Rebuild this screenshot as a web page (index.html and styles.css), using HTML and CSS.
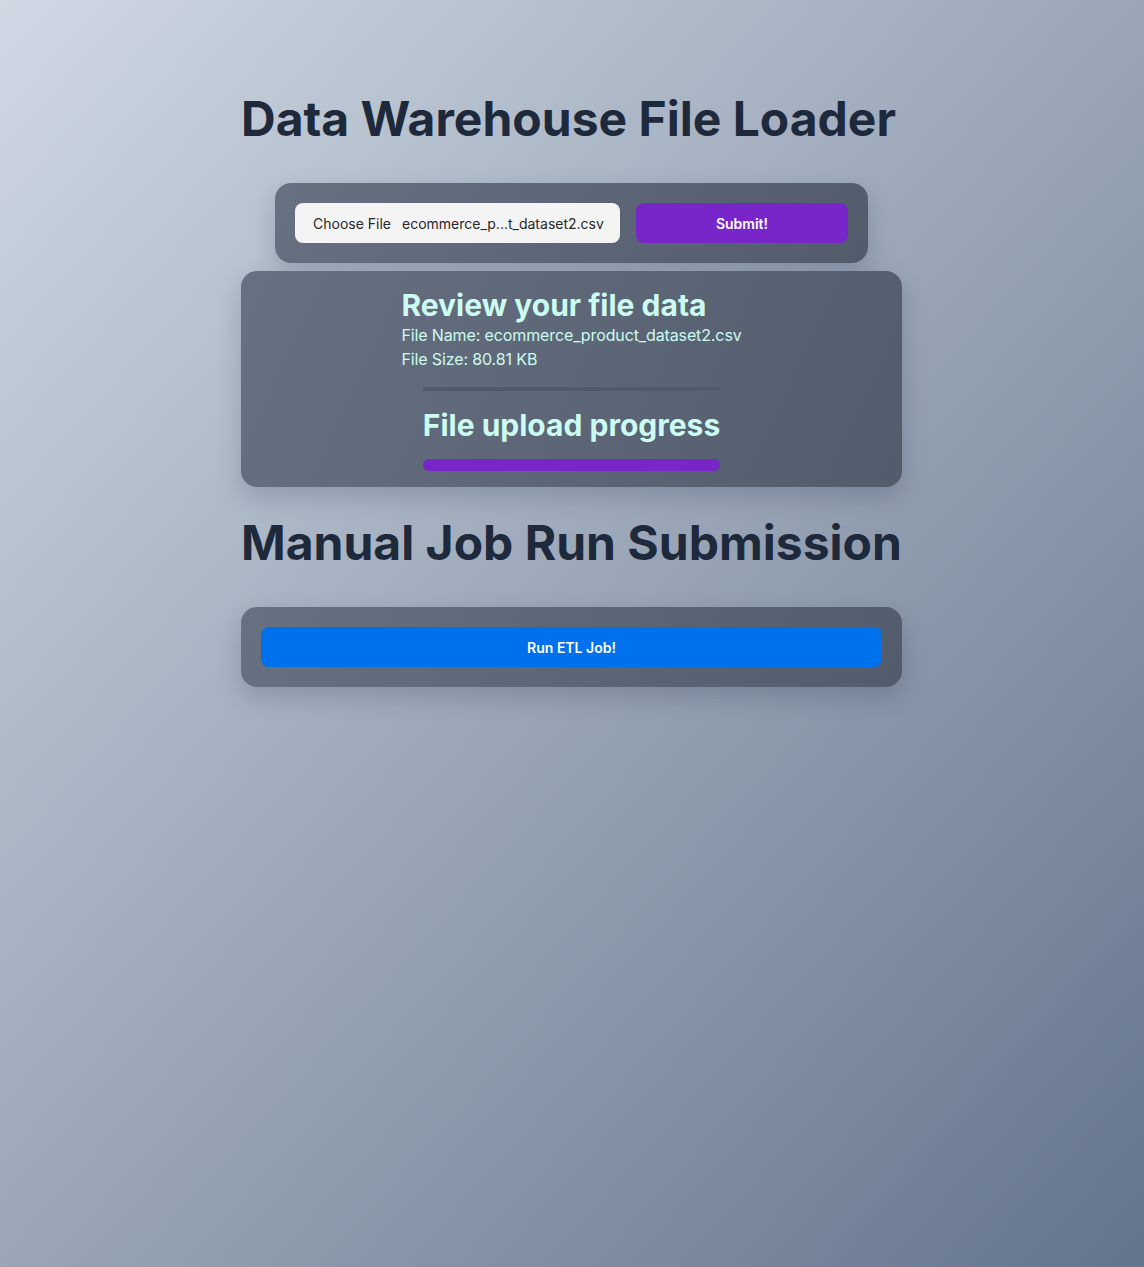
FILE: index.html
```html
<!DOCTYPE html>
<html lang="en">
<head>
<meta charset="utf-8">
<title>Data Warehouse File Loader</title>
<link rel="stylesheet" href="styles.css">
</head>
<body>
<main class="page">
  <h1 class="title title-first">Data Warehouse File Loader</h1>
  <form class="card upload-card">
    <div class="file-input">
      <span class="file-btn">Choose File</span>
      <span class="file-name">ecommerce_p...t_dataset2.csv</span>
    </div>
    <button type="button" class="btn btn-purple">Submit!</button>
  </form>
  <section class="card review-card">
    <div class="review-info">
      <h2 class="sub">Review your file data</h2>
      <p class="info-line">File Name: ecommerce_product_dataset2.csv</p>
      <p class="info-line">File Size: 80.81 KB</p>
    </div>
    <div class="progress-section">
      <h2 class="sub">File upload progress</h2>
      <div class="progress-track"><div class="progress-fill" style="width:100%"></div></div>
    </div>
  </section>
  <h1 class="title title-second">Manual Job Run Submission</h1>
  <section class="card run-card">
    <button type="button" class="btn btn-blue">Run ETL Job!</button>
  </section>
</main>
</body>
</html>
```

FILE: styles.css
```css
* { box-sizing: border-box; }
html, body { margin: 0; padding: 0; }
body {
  min-height: 100vh;
  background: linear-gradient(to bottom right, #cfd8e3, #64748b);
  font-family: Inter, "Noto Sans", sans-serif;
  color: #1e293b;
}
.page {
  width: 661px;
  margin-left: calc(50% - 331px);
  display: flex;
  flex-direction: column;
  padding-top: 95px;
}
.title {
  font-size: 48px;
  line-height: 48px;
  font-weight: 700;
  margin: 0;
  color: #1e293b;
  white-space: nowrap;
}
.title-first { margin-bottom: 40px; }
.title-second { margin-top: 32px; margin-bottom: 40px; }
.card {
  background: linear-gradient(115deg, #677181, #525c6c);
  border-radius: 16px;
  box-shadow: 0 10px 25px rgba(15, 23, 42, 0.18);
}
.upload-card {
  align-self: center;
  display: flex;
  gap: 16px;
  padding: 20px;
  margin: 0 0 8px;
}
.file-input {
  width: 325px;
  height: 40px;
  background: #f4f4f5;
  border-radius: 8px;
  display: flex;
  align-items: center;
  padding-left: 18px;
  font-size: 14px;
  color: #27272a;
  white-space: nowrap;
}
.file-btn { margin-right: 11px; }
.btn {
  border: none;
  border-radius: 8px;
  height: 40px;
  color: #fff;
  font-family: Inter, "Noto Sans", sans-serif;
  font-size: 14px;
  font-weight: 600;
  cursor: pointer;
}
.btn-purple { width: 212px; background: #7826c9; }
.btn-blue { width: 100%; background: #0071ec; }
.review-card {
  display: flex;
  flex-direction: column;
  align-items: center;
  padding: 16px 20px;
}
.sub {
  margin: 0;
  font-size: 30px;
  line-height: 36px;
  font-weight: 700;
  color: #ccfbf1;
}
.info-line {
  margin: 0;
  font-size: 16px;
  line-height: 24px;
  letter-spacing: -0.12px;
  color: #ccfbf1;
}
.progress-section {
  margin-top: 16px;
  border-top: 4px solid #525a67;
  padding-top: 16px;
}
.progress-track {
  margin-top: 16px;
  height: 12px;
  border-radius: 6px;
  background: #4b5563;
  overflow: hidden;
}
.progress-fill {
  height: 100%;
  background: #7826c9;
  border-radius: 6px;
}
.run-card { padding: 20px; }
```
